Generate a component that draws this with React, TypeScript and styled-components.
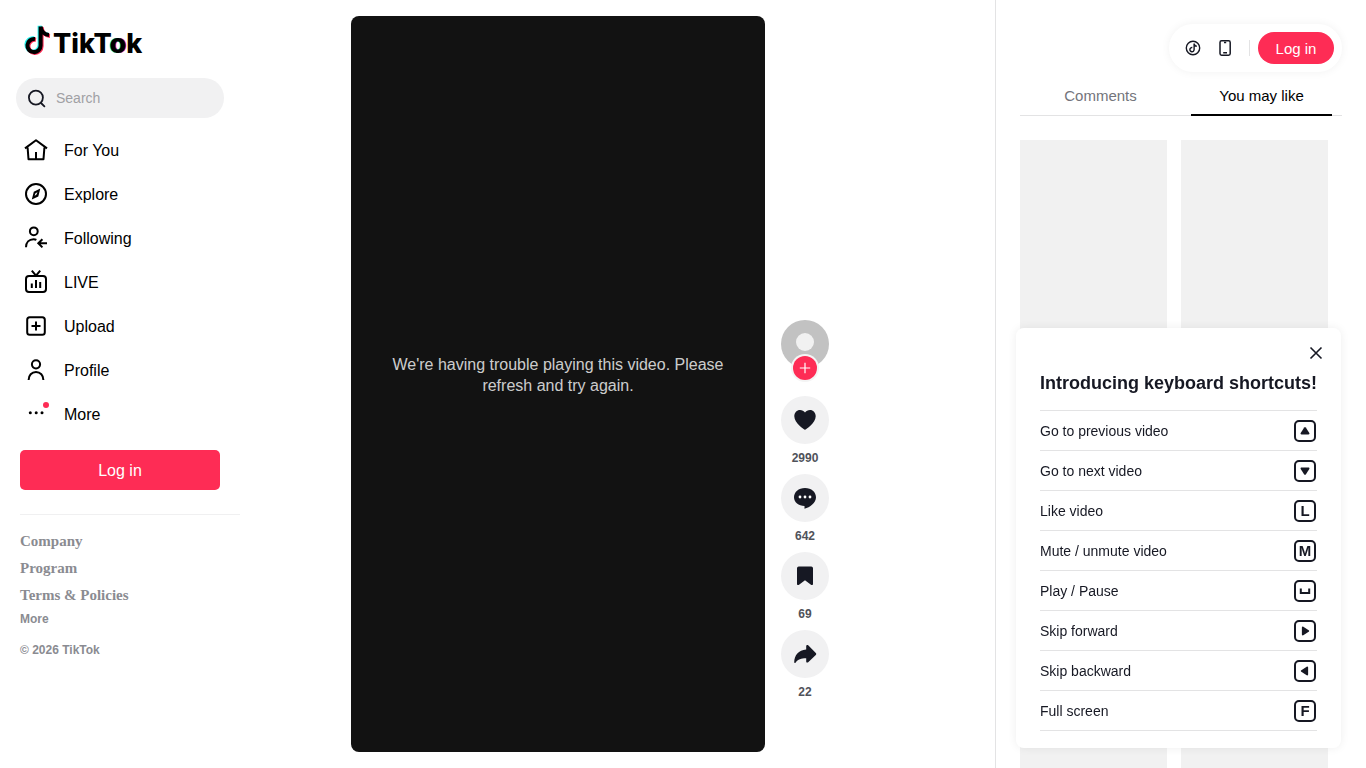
import React from 'react';
import styled, { createGlobalStyle } from 'styled-components';

const GlobalStyle = createGlobalStyle`
  *, *::before, *::after { box-sizing: border-box; }
  body {
    margin: 0;
    background: #fff;
    color: #161823;
    font-family: "Liberation Sans", Arial, sans-serif;
  }
  button, input { font-family: inherit; }
  button { border: 0; padding: 0; background: none; color: inherit; cursor: pointer; }
  a { color: inherit; text-decoration: none; }
  svg { display: block; flex-shrink: 0; overflow: visible; }
  ul { list-style: none; margin: 0; padding: 0; }
`;

const Page = styled.div`
  display: grid;
  grid-template-columns: 240px 1fr 371px;
  min-height: 100vh;
`;

/* Sidebar */
const Sidebar = styled.aside`
  display: flex;
  flex-direction: column;
  padding-top: 24px;
`;

const Logo = styled.a`
  display: flex;
  align-items: center;
  gap: 1px;
  height: 32px;
  margin: 0 24px 22px;
`;

const Wordmark = styled.span`
  font: 800 27px/32px Inter, "Liberation Sans", sans-serif;
  color: #000;
  padding-top: 7px;
`;

const GlowLetter = styled.span`
  text-shadow: -1px 0 #25f4ee, 1px 0 #fe2c55;
`;

const SearchForm = styled.form`
  display: flex;
  align-items: center;
  gap: 8px;
  height: 40px;
  margin: 0 16px 10px;
  padding: 0 16px 0 8px;
  border-radius: 20px;
  background: #f1f1f2;
`;

const IconButton = styled.button`
  display: flex;
`;

const SearchInput = styled.input`
  flex: 1;
  min-width: 0;
  border: 0;
  padding: 0;
  outline: 0;
  background: transparent;
  font-size: 14px;
  line-height: 20px;
  color: #161823;
  &::placeholder { color: #a0a0a4; opacity: 1; }
`;

const NavLink = styled.a`
  display: flex;
  align-items: center;
  gap: 16px;
  height: 44px;
  padding: 0 24px;
  font-size: 16px;
  line-height: 25px;
  color: #000;
`;

const SidebarLogin = styled.button`
  height: 40px;
  margin: 14px 20px 24px;
  padding-top: 1px;
  border-radius: 5px;
  background: #fe2c55;
  color: #fff;
  font-size: 16px;
`;

const Footer = styled.footer`
  display: flex;
  flex-direction: column;
  align-items: flex-start;
  margin-left: 20px;
  padding-top: 13px;
  border-top: 1px solid #f0f0f1;
  color: #8a8b91;
`;

const FooterLink = styled.a`
  font: bold 15px/27px "Liberation Serif", "Times New Roman", serif;
`;

const FooterNote = styled.p`
  margin: 0 0 11px;
  font-size: 12px;
  font-weight: bold;
  line-height: 20px;
`;

/* Player */
const Main = styled.main`
  display: flex;
  justify-content: center;
  align-items: flex-end;
  gap: 16px;
  padding: 16px 55px 16px 0;
`;

const Video = styled.section`
  display: flex;
  align-items: center;
  justify-content: center;
  height: calc(100vh - 32px);
  aspect-ratio: 9 / 16;
  padding: 0 36px 18px;
  border-radius: 8px;
  background: #121212;
  color: rgba(255, 255, 255, 0.8);
  font-size: 16px;
  line-height: 21px;
  text-align: center;
`;

const Actions = styled.div`
  display: flex;
  flex-direction: column;
  width: 48px;
  padding-bottom: 44px;
`;

const Avatar = styled.div`
  position: relative;
  height: 48px;
  margin-bottom: 28px;
`;

const FollowButton = styled.button`
  position: absolute;
  left: 12px;
  bottom: -12px;
  width: 24px;
  height: 24px;
  border-radius: 50%;
  background: #fe2c55;
  box-shadow: 0 0 0 2px #f4f4f4;
`;

const Action = styled.button`
  display: flex;
  flex-direction: column;
  align-items: center;
  height: 78px;
  font-size: 12px;
  font-weight: bold;
  line-height: 17px;
  color: #50525a;
`;

const ActionCircle = styled.span`
  display: grid;
  place-items: center;
  width: 48px;
  height: 48px;
  margin-bottom: 6px;
  border-radius: 50%;
  background: #f1f1f2;
  color: #161823;
`;

/* Right panel */
const Panel = styled.aside`
  display: flex;
  flex-direction: column;
  padding: 76px 24px 0;
  border-left: 1px solid #e3e3e4;
`;

const Tabs = styled.div`
  display: grid;
  grid-template-columns: 1fr 1fr;
  height: 40px;
  margin-bottom: 24px;
  box-shadow: inset 0 -1px #e3e3e4;
`;

const Tab = styled.button<{ $active?: boolean }>`
  margin: 0 10px;
  padding-top: 2px;
  border-bottom: 2px solid ${(p) => (p.$active ? '#000' : 'transparent')};
  color: ${(p) => (p.$active ? '#000' : '#73747b')};
  font-size: 15px;
  line-height: 20px;
`;

const Suggestions = styled.div`
  flex: 1;
  display: grid;
  grid-template-columns: 1fr 1fr;
  gap: 14px;
  padding-right: 14px;
`;

const Skeleton = styled.div`
  background: #f1f1f1;
`;

const TopBar = styled.div`
  position: fixed;
  top: 24px;
  right: 24px;
  display: flex;
  align-items: center;
  gap: 16px;
  height: 48px;
  padding: 0 8px 0 16px;
  border-radius: 24px;
  background: #fff;
  box-shadow: 0 0 10px rgba(0, 0, 0, 0.06);
`;

const TopLogin = styled.button`
  width: 76px;
  height: 32px;
  border-radius: 16px;
  background: #fe2c55;
  color: #fff;
  font-size: 15px;
`;

const LoginGroup = styled.div`
  display: flex;
  align-items: center;
  gap: 8px;
`;

const Divider = styled.span`
  width: 1px;
  height: 16px;
  background: #e3e3e4;
`;

const Shortcuts = styled.section`
  position: fixed;
  right: 25px;
  bottom: 20px;
  width: 325px;
  padding: 17px 24px;
  border-radius: 8px;
  background: #fff;
  box-shadow: 0 0 10px rgba(0, 0, 0, 0.07);
`;

const CloseButton = styled.button`
  display: block;
  margin: 0 -7px 0 auto;
`;

const ShortcutsTitle = styled.h2`
  margin: 10px 0 15px;
  font-size: 18px;
  line-height: 24px;
  white-space: nowrap;
`;

const ShortcutRow = styled.li`
  display: flex;
  align-items: center;
  justify-content: space-between;
  height: 40px;
  border-bottom: 1px solid #e3e3e4;
  font-size: 14px;
  line-height: 20px;
  &:first-child { height: 41px; border-top: 1px solid #e3e3e4; }
`;

const Key = styled.kbd`
  display: grid;
  place-items: center;
  width: 22px;
  height: 22px;
  margin-right: 1px;
  border: 2px solid #161823;
  border-radius: 5px;
  font: bold 15px/18px "Liberation Sans", Arial, sans-serif;
`;

const NOTE = 'M11 14.500A6.600 6.600 0 1 0 16.600 21V2M16.600 2C17.200 6.800 20.300 10.300 25 10.600';

const LineIcon = ({ children }: { children: React.ReactNode }) => (
  <svg width="24" height="24" viewBox="0 0 24 24" fill="none" stroke="#000" strokeWidth="2" aria-hidden="true">
    {children}
  </svg>
);

const navItems = [
  {
    label: 'For You',
    icon: <path d="M1 10.400 12 2.200l11 8.200M3.600 9.500l.9 11.700h15l.9-11.700M12 14v7" strokeLinejoin="round" />,
  },
  {
    label: 'Explore',
    icon: (
      <>
        <circle cx="12" cy="12" r="10" />
        <path fill="#000" stroke="none" fillRule="evenodd" d="M16.300 6.500 9.800 9.700 7.800 17.500l6.500-3.100zM11.500 11.200l2-1-1.200 2.600-1.700 1z" />
      </>
    ),
  },
  {
    label: 'Following',
    icon: (
      <>
        <circle cx="9.800" cy="5.300" r="3.900" />
        <path d="M2 21.300c0-4.800 3-8 7.600-8 1 0 2 .2 2.800.6M23 17.300h-8.400M18.400 13.200l-4.100 4.100 4.100 4.100" />
      </>
    ),
  },
  {
    label: 'LIVE',
    icon: <path d="M5 6h14a3 3 0 0 1 3 3v10a3 3 0 0 1-3 3H5a3 3 0 0 1-3-3V9a3 3 0 0 1 3-3zM7.800.7 12 5.700 16.200.7M7.800 13.500v4.500M12 10v8M16.200 12v6" />,
  },
  {
    label: 'Upload',
    icon: (
      <>
        <rect x="3.200" y="3.200" width="17.600" height="17.600" rx="2.500" />
        <path d="M12 7.500v9M7.500 12h9" />
      </>
    ),
  },
  {
    label: 'Profile',
    icon: (
      <>
        <circle cx="12" cy="6.300" r="4.100" />
        <path d="M4.600 22c0-4.800 3.100-8 7.400-8s7.400 3.200 7.400 8" />
      </>
    ),
  },
  {
    label: 'More',
    icon: (
      <g stroke="none" fill="#000">
        <circle cx="6.300" cy="10.700" r="1.500" />
        <circle cx="12.200" cy="10.700" r="1.500" />
        <circle cx="18" cy="10.700" r="1.500" />
        <circle cx="22" cy="3" r="3" fill="#fe2c55" />
      </g>
    ),
  },
];

const actions = [
  {
    name: 'Like',
    count: 2990,
    icon: <path d="M12 21.800c-.8 0-10.700-6.900-10.700-13.500C1.300 4.600 3.900 2 7 2c2.100 0 3.900 1 5 2.600C13.100 3 14.900 2 17 2c3.100 0 5.700 2.600 5.700 6.300 0 6.600-9.900 13.500-10.700 13.500z" />,
  },
  {
    name: 'Comments',
    count: 642,
    icon: (
      <>
        <path d="M12 2C5.500 2 1 6.100 1 11.300c0 5.100 4.600 8.500 10.500 8.600v2.800c5.500-1.200 11.500-5.800 11.500-11.400C23 6.100 18.500 2 12 2z" />
        <g fill="#fff">
          <circle cx="7" cy="11" r="1.400" />
          <circle cx="12" cy="11" r="1.400" />
          <circle cx="17" cy="11" r="1.400" />
        </g>
      </>
    ),
  },
  {
    name: 'Save',
    count: 69,
    icon: <path d="M4 4.200A1.800 1.800 0 0 1 5.800 2.400h12.400A1.800 1.800 0 0 1 20 4.200v15.900c0 .9-1 1.300-1.700.8L12 16.300l-6.300 4.600c-.7.5-1.700.1-1.700-.8z" />,
  },
  {
    name: 'Share',
    count: 22,
    icon: <path d="M13.200 4.200c0-1.100 1.200-1.600 2-.9l7.600 7.600c.6.600.6 1.500 0 2.100l-7.600 7.300c-.8.700-2 .2-2-.9v-3.200c-4.300-.1-8.200.9-10.700 4.500-.5.700-1.300.4-1.300-.4C1.300 13.300 5.500 8 13.200 7.500z" />,
  },
];

const Glyph = ({ d }: { d: string }) => (
  <svg width="18" height="18" viewBox="0 0 18 18" fill="#161823" aria-hidden="true">
    <path d={d} />
  </svg>
);

const shortcuts = [
  { label: 'Go to previous video', key: <Glyph d="M8.200 5.600c.4-.6 1.200-.6 1.600 0l3.500 5.400c.4.700 0 1.400-.8 1.400h-7c-.8 0-1.200-.7-.8-1.400z" /> },
  { label: 'Go to next video', key: <Glyph d="M8.200 12.400c.4.600 1.200.6 1.600 0L13.300 7c.4-.7 0-1.400-.8-1.400h-7c-.8 0-1.200.7-.8 1.400z" /> },
  { label: 'Like video', key: 'L' },
  { label: 'Mute / unmute video', key: 'M' },
  { label: 'Play / Pause', key: <Glyph d="M3.800 6.500h2v3.600h6.400V6.500h2v5.600H3.800z" /> },
  { label: 'Skip forward', key: <Glyph d="M12.700 8.200c.6.400.6 1.200 0 1.600l-5.400 3.500c-.7.400-1.400 0-1.400-.8v-7c0-.8.7-1.200 1.400-.8z" /> },
  { label: 'Skip backward', key: <Glyph d="M5.300 8.200c-.6.400-.6 1.200 0 1.600l5.400 3.500c.7.400 1.400 0 1.400-.8v-7c0-.8-.7-1.200-1.400-.8z" /> },
  { label: 'Full screen', key: 'F' },
];

export default function App() {
  return (
    <>
      <GlobalStyle />
      <Page>
        <Sidebar>
          <Logo href="#" aria-label="TikTok">
            <svg width="28" height="32" viewBox="0 0 28 32" fill="none" strokeWidth="4" aria-hidden="true">
              <path d={NOTE} stroke="#25f4ee" transform="translate(-1 -.2)" />
              <path d={NOTE} stroke="#fe2c55" transform="translate(1 1.300)" />
              <path d={NOTE} stroke="#000" transform="translate(0 .5)" />
            </svg>
            <Wordmark>TikT<GlowLetter>o</GlowLetter>k</Wordmark>
          </Logo>
          <SearchForm role="search">
            <IconButton type="button" aria-label="Search">
              <svg width="24" height="24" viewBox="0 0 24 24" fill="none" stroke="#161823" strokeWidth="1.800" strokeLinecap="round">
                <circle cx="11.900" cy="11.600" r="7" />
                <path d="m17 17 3.400 3.400" />
              </svg>
            </IconButton>
            <SearchInput type="search" placeholder="Search" aria-label="Search" />
          </SearchForm>
          <nav>
            {navItems.map((item) => (
              <NavLink href="#" key={item.label}>
                <LineIcon>{item.icon}</LineIcon>
                {item.label}
              </NavLink>
            ))}
          </nav>
          <SidebarLogin>Log in</SidebarLogin>
          <Footer>
            <FooterLink href="#">Company</FooterLink>
            <FooterLink href="#">Program</FooterLink>
            <FooterLink href="#">Terms &amp; Policies</FooterLink>
            <FooterNote as="a" href="#">More</FooterNote>
            <FooterNote>© 2026 TikTok</FooterNote>
          </Footer>
        </Sidebar>

        <Main>
          <Video>We're having trouble playing this video. Please refresh and try again.</Video>
          <Actions>
            <Avatar>
              <svg width="48" height="48" viewBox="0 0 48 48" aria-hidden="true">
                <circle cx="24" cy="24" r="24" fill="#c2c2c2" />
                <circle cx="24" cy="22" r="9" fill="#f1f1f1" />
              </svg>
              <FollowButton aria-label="Follow">
                <svg width="24" height="24" viewBox="0 0 24 24" stroke="#fff" strokeWidth="1.200">
                  <path d="M12 6.800v10.400M6.800 12h10.400" />
                </svg>
              </FollowButton>
            </Avatar>
            {actions.map((action) => (
              <Action key={action.name} aria-label={action.name}>
                <ActionCircle>
                  <svg width="24" height="24" viewBox="0 0 24 24" fill="currentColor" aria-hidden="true">
                    {action.icon}
                  </svg>
                </ActionCircle>
                {action.count}
              </Action>
            ))}
          </Actions>
        </Main>

        <Panel>
          <Tabs role="tablist">
            <Tab role="tab" aria-selected="false">Comments</Tab>
            <Tab role="tab" aria-selected="true" $active>You may like</Tab>
          </Tabs>
          <Suggestions>
            <Skeleton />
            <Skeleton />
          </Suggestions>
        </Panel>
      </Page>

      <TopBar>
        <IconButton aria-label="Get coins">
          <svg width="16" height="16" viewBox="0 0 16 16" fill="none" stroke="#161823" strokeWidth="1.400">
            <circle cx="8" cy="8" r="6.700" />
            <path d={NOTE} strokeWidth="4.400" transform="translate(3.800 2.900) scale(.32)" />
          </svg>
        </IconButton>
        <IconButton aria-label="Get app">
          <svg width="16" height="16" viewBox="0 0 16 16" fill="none" stroke="#161823" strokeWidth="1.500">
            <rect x="3" y=".8" width="10.200" height="14.400" rx="1.600" />
            <path d="M6.200 12.800h3.800M7 2.500h2.200" />
          </svg>
        </IconButton>
        <LoginGroup>
          <Divider />
          <TopLogin>Log in</TopLogin>
        </LoginGroup>
      </TopBar>

      <Shortcuts aria-labelledby="shortcuts-title">
        <CloseButton aria-label="Close">
          <svg width="16" height="16" viewBox="0 0 16 16" stroke="#161823" strokeWidth="1.600">
            <path d="m2.500 2.500 11 11M13.500 2.500l-11 11" />
          </svg>
        </CloseButton>
        <ShortcutsTitle id="shortcuts-title">Introducing keyboard shortcuts!</ShortcutsTitle>
        <ul>
          {shortcuts.map((shortcut) => (
            <ShortcutRow key={shortcut.label}>
              {shortcut.label}
              <Key>{shortcut.key}</Key>
            </ShortcutRow>
          ))}
        </ul>
      </Shortcuts>
    </>
  );
}
